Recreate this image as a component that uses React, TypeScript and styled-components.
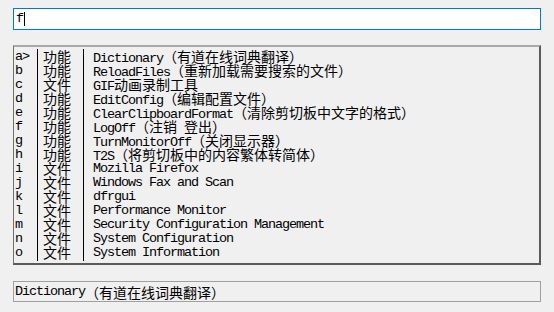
import React from 'react'
import styled, { createGlobalStyle } from 'styled-components'

type Item = {
	key: string,
	kind: string,
	title: string
}

const items: Item[] = [
	{ key: 'a', kind: '功能', title: 'Dictionary（有道在线词典翻译）' },
	{ key: 'b', kind: '功能', title: 'ReloadFiles（重新加载需要搜索的文件）' },
	{ key: 'c', kind: '文件', title: 'GIF动画录制工具' },
	{ key: 'd', kind: '功能', title: 'EditConfig（编辑配置文件）' },
	{ key: 'e', kind: '功能', title: 'ClearClipboardFormat（清除剪切板中文字的格式）' },
	{ key: 'f', kind: '功能', title: 'LogOff（注销 登出）' },
	{ key: 'g', kind: '功能', title: 'TurnMonitorOff（关闭显示器）' },
	{ key: 'h', kind: '功能', title: 'T2S（将剪切板中的内容繁体转简体）' },
	{ key: 'i', kind: '文件', title: 'Mozilla Firefox' },
	{ key: 'j', kind: '文件', title: 'Windows Fax and Scan' },
	{ key: 'k', kind: '文件', title: 'dfrgui' },
	{ key: 'l', kind: '文件', title: 'Performance Monitor' },
	{ key: 'm', kind: '文件', title: 'Security Configuration Management' },
	{ key: 'n', kind: '文件', title: 'System Configuration' },
	{ key: 'o', kind: '文件', title: 'System Information' }
]

// split latin / cjk runs so each gets its own width
const Mixed = ({ text }: { text: string }) => {
	const parts = text.split(/([\u3000-\u9fff\uff00-\uffef]+)/).filter(p => p !== '')
	return (
		<>
			{parts.map((p, i) =>
				/[\u3000-\u9fff\uff00-\uffef]/.test(p)
					? <Wide key={i}>{p}</Wide>
					: <Narrow key={i}>{p}</Narrow>
			)}
		</>
	)
}

const App = () => {
	return (
		<>
			<GlobalStyle />
			<Page>
				<SearchBox>
					<Mixed text="f" />
					<Caret />
				</SearchBox>
				<ListBox>
					{items.map((item, idx) => (
						<Row key={item.key}>
							<KeyCell><Mixed text={item.key + (idx === 0 ? '>' : '')} /></KeyCell>
							<KindCell><Wide>{item.kind}</Wide></KindCell>
							<TitleCell><Mixed text={item.title} /></TitleCell>
						</Row>
					))}
				</ListBox>
				<StatusBar>
					<Mixed text={items[0].title} />
				</StatusBar>
			</Page>
		</>
	)
}

const GlobalStyle = createGlobalStyle`
	html, body {
		margin: 0;
		padding: 0;
		background: #f0f0f0;
	}
	body {
		font-family: "Liberation Mono", "Noto Sans CJK SC", monospace;
		color: #000;
	}
`

const Page = styled.div`
	width: 554px;
	height: 312px;
	box-sizing: border-box;
	padding: 8px 13px 0 13px;
	display: flex;
	flex-direction: column;
	background: #f0f0f0;
`

const Narrow = styled.span`
	font-family: "Liberation Mono", monospace;
	font-size: 13.5px;
	letter-spacing: -1.1px;
	white-space: pre;
`

const Wide = styled.span`
	font-family: "Noto Sans CJK SC", sans-serif;
	font-size: 14px;
	white-space: pre;
`

const SearchBox = styled.div`
	height: 22px;
	box-sizing: border-box;
	border: 1px solid #0078d7;
	background: #fff;
	display: flex;
	align-items: center;
	padding-left: 2px;
	line-height: 14px;
`

const Caret = styled.span`
	display: inline-block;
	width: 1px;
	height: 14px;
	margin-left: 1px;
	background: #000;
`

const ListBox = styled.div`
	margin-top: 15px;
	height: 220px;
	box-sizing: border-box;
	border: 1px solid #6f6f6f;
	border-top: 2px solid #a9a9a9;
	border-right: 2px solid #5a5a5a;
	border-bottom: 2px solid #5a5a5a;
	padding-top: 2px;
	background: #f0f0f0;
	overflow: hidden;
`

const Row = styled.div`
	display: grid;
	grid-template-columns: 23px 46px 1fr;
	height: 14px;
	line-height: 14px;
	white-space: nowrap;
`

const KeyCell = styled.div`
	padding-left: 1px;
`

const KindCell = styled.div`
	border-left: 1px solid #000;
	padding-left: 5px;
`

const TitleCell = styled.div`
	border-left: 1px solid #000;
	padding-left: 9px;
`

const StatusBar = styled.div`
	margin-top: 16px;
	height: 21px;
	box-sizing: border-box;
	border: 1px solid #a0a0a0;
	background: #f0f0f0;
	display: flex;
	align-items: center;
	padding-left: 1px;
	line-height: 14px;
`

export default App
